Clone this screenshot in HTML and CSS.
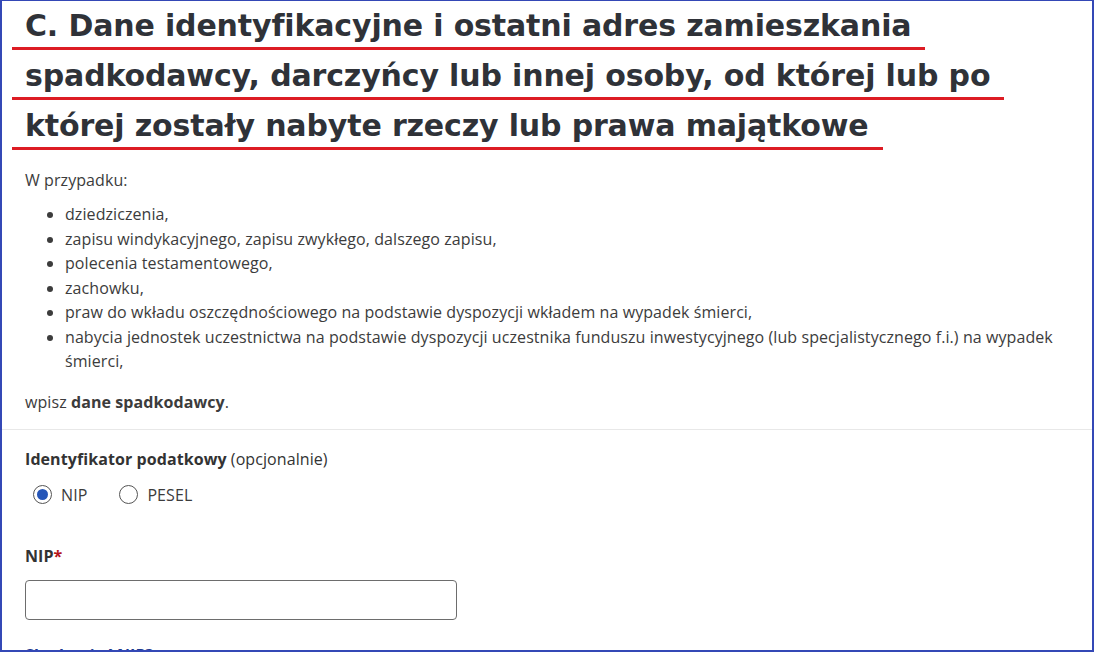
FILE: index.html
```html
<!DOCTYPE html>
<html lang="pl">
  <head>
    <title>Dane spadkodawcy</title>
    <meta charset="UTF-8" />
    <link rel="stylesheet" href="styles.css">
  </head>
  <body>
    <div class="frame">

      <section class="intro">
        <h2 class="section-title"><span class="marked">C. Dane identyfikacyjne i ostatni adres zamieszkania<br>spadkodawcy, darczyńcy lub innej osoby, od której lub po<br>której zostały nabyte rzeczy lub prawa majątkowe</span></h2>
        <p>W przypadku:</p>
        <ul class="cases">
          <li>dziedziczenia,</li>
          <li>zapisu windykacyjnego, zapisu zwykłego, dalszego zapisu,</li>
          <li>polecenia testamentowego,</li>
          <li>zachowku,</li>
          <li>praw do wkładu oszczędnościowego na podstawie dyspozycji wkładem na wypadek śmierci,</li>
          <li>nabycia jednostek uczestnictwa na podstawie dyspozycji uczestnika funduszu inwestycyjnego (lub specjalistycznego f.i.) na wypadek śmierci,</li>
        </ul>
        <p>wpisz <strong>dane spadkodawcy</strong>.</p>
      </section>

      <div class="divider"></div>

      <form class="fields">
        <fieldset class="field-group">
          <legend class="label">Identyfikator podatkowy <span class="hint">(opcjonalnie)</span></legend>
          <div class="radios">
            <label class="radio"><span class="dot checked"></span>NIP</label>
            <label class="radio"><span class="dot"></span>PESEL</label>
          </div>
        </fieldset>

        <div class="field">
          <label class="label" for="nip">NIP<span class="req">*</span></label>
          <input id="nip" class="text-input" type="text">
        </div>

        <a class="help-link" href="#">Skąd wziąć NIP?</a>
      </form>

    </div>
  </body>
</html>
```

FILE: styles.css
```css
html, body {
  margin: 0;
  padding: 0;
  background: white;
}
.frame {
  width: 1094px;
  height: 652px;
  box-sizing: border-box;
  border: 2px solid #3448b6;
  border-top-width: 1px;
  overflow: hidden;
  font-family: "Open Sans", "Noto Sans", sans-serif;
  font-size: 16px;
  letter-spacing: 0.08px;
  color: #3c3c3c;
}
.intro {
  padding: 0 23px 0 23px;
}
.section-title {
  margin: 0 0 0 -13px;
  padding-top: 0;
  font-family: "DejaVu Sans", sans-serif;
  font-weight: bold;
  font-size: 30px;
  letter-spacing: -0.15px;
  line-height: 50px;
  color: #2f3238;
}
.marked {
  padding: 0 14px 7px 13px;
  background-image: linear-gradient(#dd1c24, #dd1c24);
  background-repeat: no-repeat;
  background-size: 100% 3px;
  background-position: 0 100%;
  -webkit-box-decoration-break: clone;
  box-decoration-break: clone;
}
.intro p {
  margin: 17px 0 0 0;
  line-height: 24px;
}
.cases {
  margin: 10px 0 0 0;
  padding-left: 40px;
  line-height: 24.5px;
}
.intro p:last-child {
  margin-top: 16px;
  padding-bottom: 15px;
}
.divider {
  height: 1px;
  background: #e8e8e8;
}
.fields {
  padding: 17px 23px 0 23px;
}
.field-group {
  border: none;
  margin: 0;
  padding: 0;
}
.label {
  display: block;
  padding: 0;
  font-weight: bold;
  line-height: 24px;
  color: #333;
}
.hint {
  font-weight: normal;
}
.req {
  color: #b4141c;
}
.radios {
  display: flex;
  gap: 32px;
  margin-top: 12px;
  padding-left: 8px;
}
.radio {
  display: flex;
  align-items: center;
  gap: 9px;
  line-height: 24px;
}
.dot {
  width: 19px;
  height: 19px;
  border: 1px solid #555;
  border-radius: 50%;
  box-sizing: border-box;
  display: flex;
  justify-content: center;
  align-items: center;
}
.dot.checked::after {
  content: "";
  width: 11px;
  height: 11px;
  border-radius: 50%;
  background: #2656b8;
}
.field {
  margin-top: 37px;
}
.text-input {
  display: block;
  margin-top: 12px;
  width: 432px;
  height: 40px;
  box-sizing: border-box;
  border: 1px solid #6d6d6d;
  border-radius: 4px;
}
.help-link {
  display: inline-block;
  margin-top: 24px;
  font-weight: bold;
  color: #1d3a8f;
  text-decoration: underline;
}
```
